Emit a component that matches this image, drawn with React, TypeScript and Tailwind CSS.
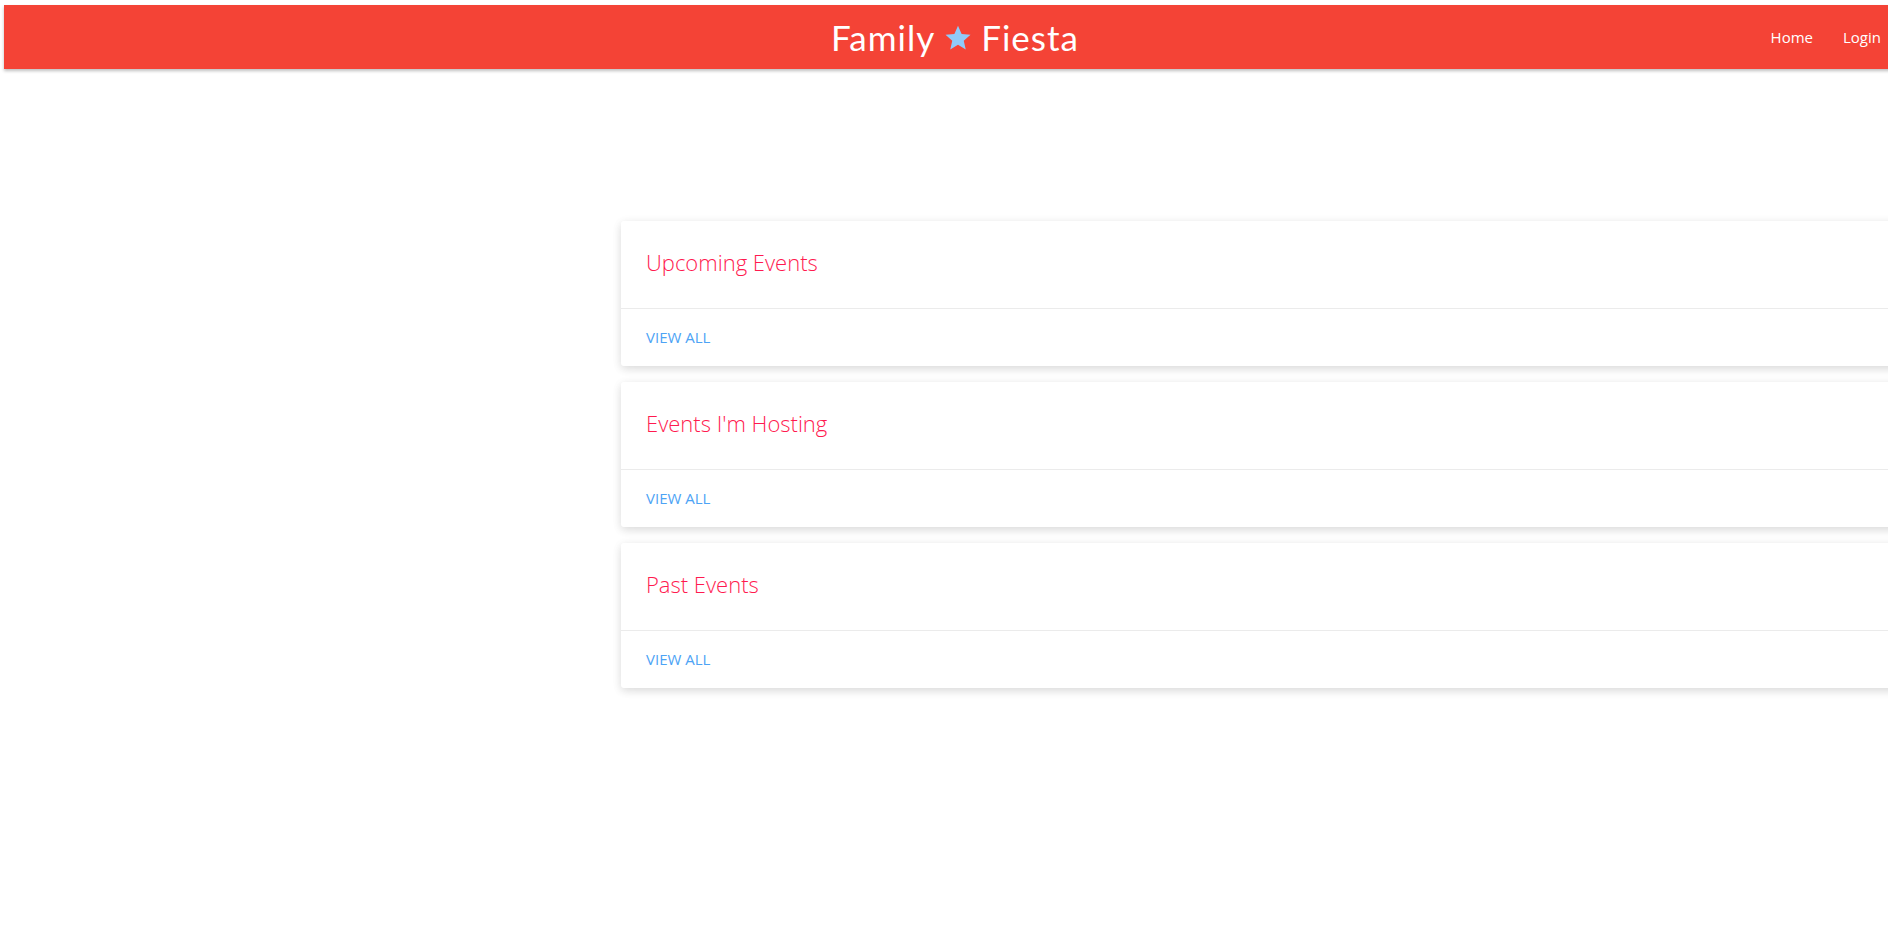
import React from 'react';

const Star: React.FC = () => (
  <svg viewBox="0 0 24 24" className="h-[30px] w-[30px] mx-[8px] mt-[1px]" fill="#90caf9">
    <path d="M12 2.2l2.9 6.6 7.1.6-5.4 4.7 1.6 7L12 17.4l-6.2 3.7 1.6-7L2 9.4l7.1-.6z" />
  </svg>
);

const App: React.FC = () => {
  const sections = ['Upcoming Events', "Events I'm Hosting", 'Past Events'];

  return (
    <div className="w-[1888px] h-[940px] overflow-hidden bg-white">
      <nav className="mt-[5px] ml-[4px] w-[1902px] h-[64px] bg-[#f44336] shadow-[0_2px_3px_rgba(0,0,0,0.25)] relative flex items-center justify-center">
        <div className="flex items-center text-white text-[35px] font-['Lato',sans-serif] tracking-[1px]">
          <span>Family</span>
          <Star />
          <span>Fiesta</span>
        </div>
        <ul className="absolute right-[25px] top-0 h-full flex items-center gap-[30px] text-white text-[15px] font-['Open_Sans',sans-serif]">
          <li>Home</li>
          <li>Login</li>
        </ul>
      </nav>

      <main className="grid grid-cols-[621px_1fr] pt-[152px]">
        <div />
        <div className="flex flex-col gap-[16px] w-[1300px]">
          {sections.map((title) => (
            <div
              key={title}
              className="bg-white rounded-[3px] shadow-[0_3px_8px_0_rgba(0,0,0,0.10),0_2px_12px_0_rgba(0,0,0,0.06)]"
            >
              <div className="h-[88px] px-[25px] pb-[4px] flex items-center border-b border-[#ebebeb]">
                <span className="text-[22px] font-light text-[#ff1a4f] font-['Open_Sans',sans-serif]">{title}</span>
              </div>
              <div className="h-[57px] px-[25px] flex items-center">
                <span className="text-[15px] uppercase text-[#4da3f5] font-['Open_Sans',sans-serif]">View All</span>
              </div>
            </div>
          ))}
        </div>
      </main>
    </div>
  );
};

export default App;
